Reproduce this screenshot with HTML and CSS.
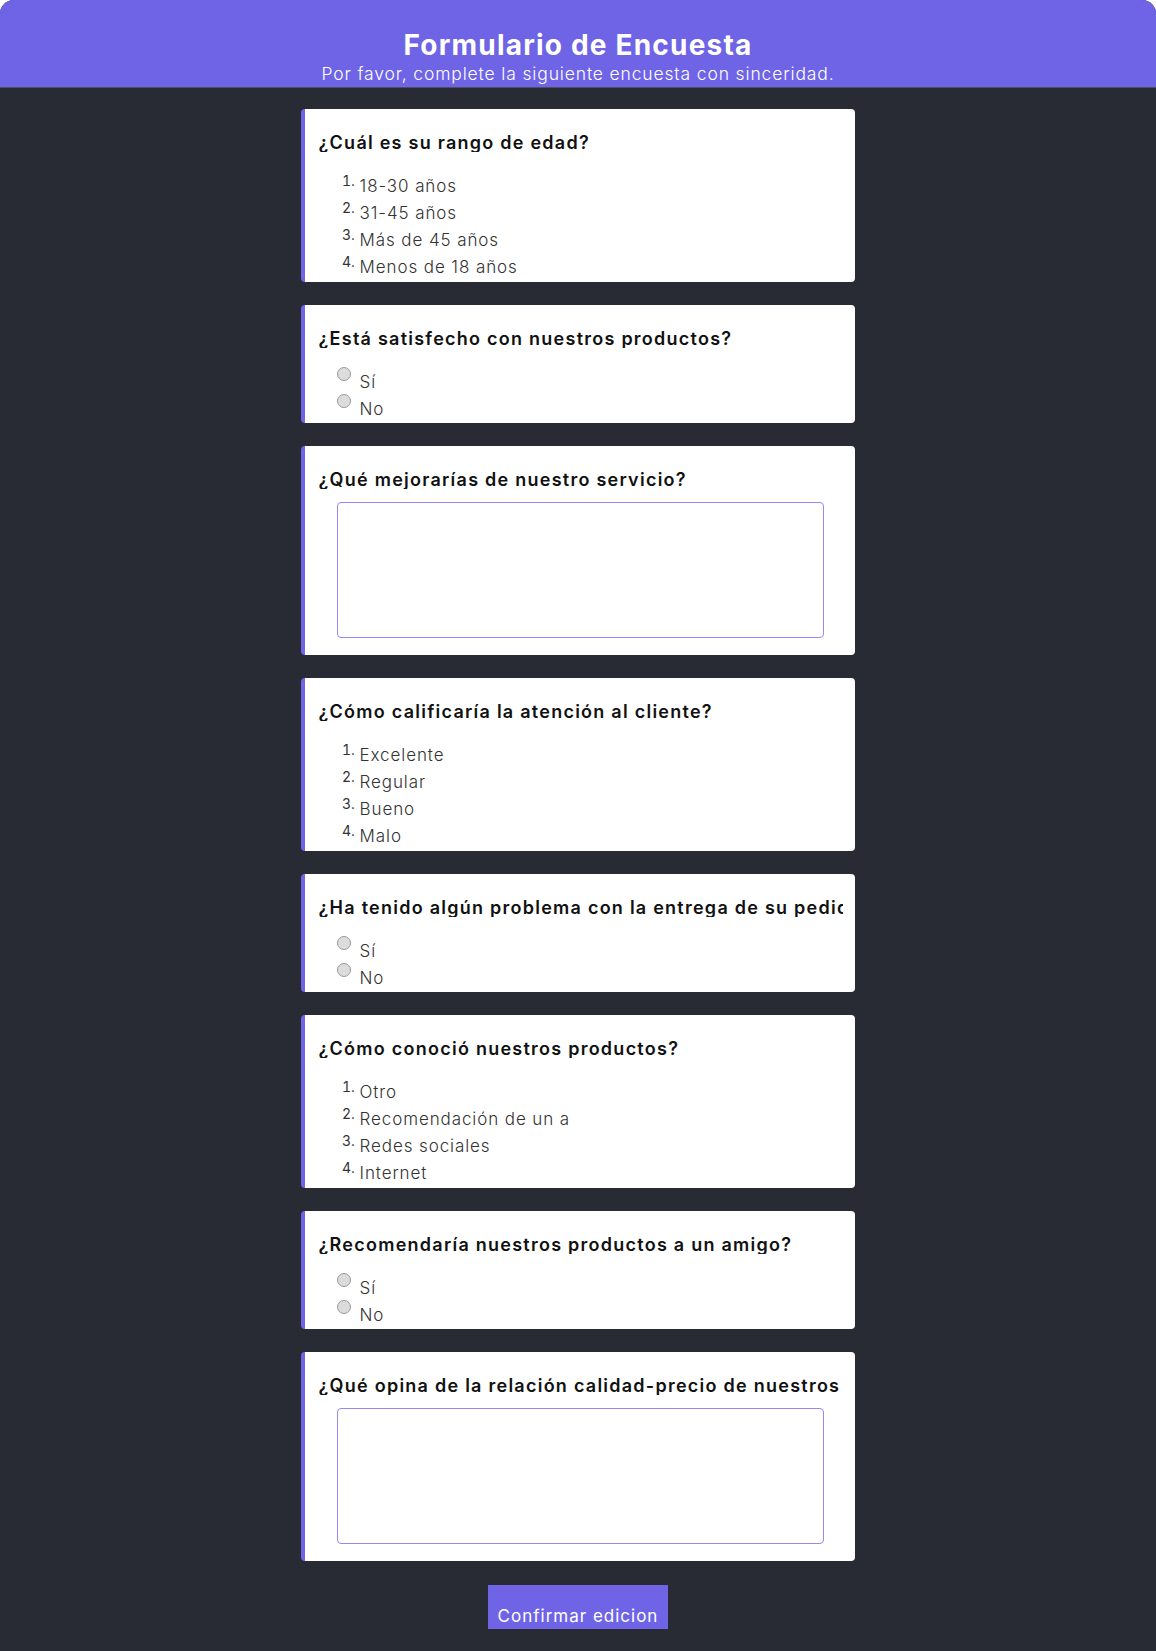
FILE: index.html
```html
<!DOCTYPE html>
<html lang="es">
<head>
<meta charset="utf-8">
<title>Formulario de Encuesta</title>
<link rel="stylesheet" href="styles.css">
</head>
<body>
<div class="app">
  <header class="top">
    <h1 class="top-title">Formulario de Encuesta</h1>
    <p class="top-sub">Por favor, complete la siguiente encuesta con sinceridad.</p>
  </header>
  <main class="survey">
    <section class="card">
      <h2 class="q">¿Cuál es su rango de edad?</h2>
      <ol class="opts">
        <li><span>18-30 años</span></li>
        <li><span>31-45 años</span></li>
        <li><span>Más de 45 años</span></li>
        <li><span>Menos de 18 años</span></li>
      </ol>
    </section>
    <section class="card card-radio">
      <h2 class="q">¿Está satisfecho con nuestros productos?</h2>
      <div class="radios">
        <label class="radio"><input type="radio" disabled><span>Sí</span></label>
        <label class="radio"><input type="radio" disabled><span>No</span></label>
      </div>
    </section>
    <section class="card card-text">
      <h2 class="q">¿Qué mejorarías de nuestro servicio?</h2>
      <textarea class="answer"></textarea>
    </section>
    <section class="card">
      <h2 class="q">¿Cómo calificaría la atención al cliente?</h2>
      <ol class="opts">
        <li><span>Excelente</span></li>
        <li><span>Regular</span></li>
        <li><span>Bueno</span></li>
        <li><span>Malo</span></li>
      </ol>
    </section>
    <section class="card card-radio">
      <h2 class="q">¿Ha tenido algún problema con la entrega de su pedido?</h2>
      <div class="radios">
        <label class="radio"><input type="radio" disabled><span>Sí</span></label>
        <label class="radio"><input type="radio" disabled><span>No</span></label>
      </div>
    </section>
    <section class="card">
      <h2 class="q">¿Cómo conoció nuestros productos?</h2>
      <ol class="opts">
        <li><span>Otro</span></li>
        <li><span>Recomendación de un a</span></li>
        <li><span>Redes sociales</span></li>
        <li><span>Internet</span></li>
      </ol>
    </section>
    <section class="card card-radio">
      <h2 class="q">¿Recomendaría nuestros productos a un amigo?</h2>
      <div class="radios">
        <label class="radio"><input type="radio" disabled><span>Sí</span></label>
        <label class="radio"><input type="radio" disabled><span>No</span></label>
      </div>
    </section>
    <section class="card card-text">
      <h2 class="q">¿Qué opina de la relación calidad-precio de nuestros productos?</h2>
      <textarea class="answer"></textarea>
    </section>
    <div class="actions">
      <button class="confirm" type="button">Confirmar edicion</button>
    </div>
  </main>
</div>
</body>
</html>
```

FILE: styles.css
```css
html {
  background: #ffffff;
}
body {
  margin: 0;
  font-family: Inter, "Open Sans", sans-serif;
}
.app {
  background: #282b33;
  border-radius: 14px 14px 0 0;
  overflow: hidden;
  min-height: 1650px;
  border-bottom: 1px solid #8a8c90;
}
.top {
  background: #6f64e6;
  color: #ffffff;
  text-align: center;
  padding: 28px 0 1px;
  border-bottom: 1px solid #4b4e66;
}
.top-title {
  margin: 0;
  font-size: 28px;
  line-height: 34px;
  font-weight: 700;
  letter-spacing: 1.2px;
}
.top-sub {
  margin: 0;
  font-size: 17.5px;
  line-height: 24px;
  font-weight: 300;
  letter-spacing: 0.85px;
}
.survey {
  padding: 21px 0 24px;
}
.card {
  width: 48%;
  box-sizing: border-box;
  margin: 0 auto 23px;
  background: #ffffff;
  border-left: 4px solid #6f64e6;
  border-radius: 4px;
  padding: 24px 12px 7px 14px;
}
.card-radio {
  padding-bottom: 4px;
}
.card-text {
  padding-bottom: 17px;
}
.q {
  margin: 0;
  font-size: 18px;
  line-height: 20px;
  height: 19px;
  font-weight: 600;
  letter-spacing: 1.25px;
  color: #111111;
  white-space: nowrap;
  overflow: hidden;
}
.opts {
  margin: 15px 0 0;
  padding-left: 40px;
  font-size: 14px;
  line-height: 27px;
  color: #333333;
}
.opts li {
  height: 27px;
}
.opts li span {
  font-size: 17px;
  line-height: 17px;
  font-weight: 300;
  letter-spacing: 0.9px;
  vertical-align: -6px;
  margin-left: 1px;
}
.radios {
  margin-top: 17px;
  padding-left: 18px;
  display: flex;
  flex-direction: column;
}
.radio {
  display: flex;
  align-items: flex-start;
  height: 27px;
  font-size: 17px;
  font-weight: 300;
  letter-spacing: 0.9px;
  color: #333333;
}
.radio input {
  appearance: none;
  width: 14px;
  height: 14px;
  margin: 2px 9px 0 0;
  border: 1px solid #9a9a9a;
  border-radius: 50%;
  background: #dcdcdc;
  box-sizing: border-box;
}
.radio span {
  padding-top: 8px;
  line-height: 19px;
}
.answer {
  display: block;
  width: 487px;
  height: 136px;
  box-sizing: border-box;
  margin: 13px auto 0;
  border: 1px solid #938af2;
  border-radius: 4px;
  resize: none;
  position: relative;
  left: -1px;
}
.actions {
  display: flex;
  justify-content: center;
  padding-top: 1px;
}
.confirm {
  width: 180px;
  height: 44px;
  background: #6f64e6;
  color: #ffffff;
  border: none;
  font-family: inherit;
  font-size: 17px;
  font-weight: 400;
  letter-spacing: 1px;
  padding: 18px 0 0;
}
```
